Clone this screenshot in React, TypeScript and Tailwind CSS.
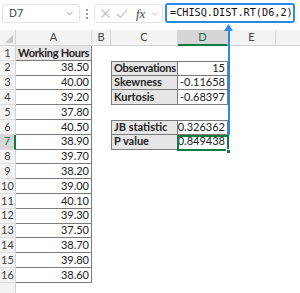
import { ChevronDown } from 'lucide-react';

const hours = ['38.50', '40.00', '39.20', '37.80', '40.50', '38.90', '39.70', '38.20', '39.00', '40.10', '39.30', '37.50', '38.70', '39.80', '38.60'];

// C/D block contents keyed by row number
const stats: Record<number, [string, string]> = {
  2: ['Observations', '15'],
  3: ['Skewness', '-0.11658'],
  4: ['Kurtosis', '-0.68397'],
  6: ['JB statistic', '0.326362'],
  7: ['P value', '0.849438'],
};

const cellFont = { fontFamily: 'Lato, "Open Sans", sans-serif' };

function ColHeader({ label, w, active }: { label: string; w: string; active?: boolean }) {
  return (
    <div
      className={`${w} h-full shrink-0 flex items-center justify-center text-[11px] border-r border-[#d4d4d4] ${
        active ? 'bg-[#d6d6d6] text-[#0e6b3b] border-b-2 border-b-[#107c41]' : 'text-[#444] border-b border-b-[#d4d4d4]'
      }`}
    >
      {label}
    </div>
  );
}

function Row({ n }: { n: number }) {
  const isTop = n === 1;
  const stat = stats[n];
  const active = n === 7;
  return (
    <div className="flex h-[14.8px] whitespace-nowrap" style={cellFont}>
      <div
        className={`w-[16px] shrink-0 flex items-center justify-center text-[11px] border-b border-[#dcdcdc] ${
          active ? 'bg-[#d6d6d6] text-[#107c41] border-r-2 border-r-[#107c41]' : 'bg-[#f3f3f3] text-[#444] border-r border-r-[#d4d4d4]'
        }`}
      >
        {n <= 16 ? n : ''}
      </div>
      {n <= 16 ? (
        <div
          className={`w-[76px] shrink-0 flex items-center px-[2px] text-[#222] border-r border-b border-[#7a7a7a] ${
            isTop ? 'bg-[#e7e6e6] font-bold justify-start text-[11px] tracking-[-0.25px]' : 'bg-white justify-end text-[11px]'
          }`}
        >
          {isTop ? 'Working Hours' : hours[n - 2]}
        </div>
      ) : (
        <div className="w-[76px] shrink-0" />
      )}
      <div className="w-[19px] shrink-0" />
      {stat ? (
        <>
          <div
            className={`w-[67px] shrink-0 flex items-center px-[2px] text-[11px] font-bold text-[#222] bg-[#e7e6e6] border-l border-r border-b border-[#7a7a7a] ${
              n === 2 || n === 6 ? 'border-t' : ''
            } ${n === 2 ? 'tracking-[-0.3px]' : ''}`}
          >
            {stat[0]}
          </div>
          <div
            className={`w-[50px] shrink-0 flex items-center justify-end px-[2px] text-[11px] text-[#222] bg-white border-r border-b border-[#7a7a7a] ${
              n === 2 || n === 6 ? 'border-t' : ''
            }`}
          >
            {stat[1]}
          </div>
        </>
      ) : (
        <div className="w-[117px] shrink-0" />
      )}
    </div>
  );
}

export default function App() {
  const rows = Array.from({ length: 17 }, (_, i) => i + 1);
  return (
    <div className="relative w-[300px] h-[293px] overflow-hidden bg-white">
      {/* formula bar */}
      <div className="h-[30px] flex items-start pt-[4px] pl-[2px]" style={{ fontFamily: '"Open Sans", Roboto, sans-serif' }}>
        <div className="w-[78px] h-[19px] rounded-[3px] border border-[#e3e3e3] bg-white flex items-center justify-between pl-[6px] pr-[4px] text-[11px] text-[#333]">
          <span>D7</span>
          <ChevronDown size={11} strokeWidth={1.6} className="text-[#777]" />
        </div>
        <div className="w-[14px] h-[19px] flex flex-col items-center justify-center gap-[2px]">
          <span className="w-[2px] h-[2px] bg-[#777] rounded-full" />
          <span className="w-[2px] h-[2px] bg-[#777] rounded-full" />
          <span className="w-[2px] h-[2px] bg-[#777] rounded-full" />
        </div>
        <div className="w-[69px] h-[19px] rounded-[3px] border border-[#e3e3e3] bg-white flex items-center pl-[5px] gap-[5px] text-[#bdbdbd]">
          <svg width="11" height="11" viewBox="0 0 11 11" fill="none" stroke="currentColor" strokeWidth="1.1">
            <path d="M1.5 1.5l8 8M9.5 1.5l-8 8" />
          </svg>
          <svg width="12" height="11" viewBox="0 0 12 11" fill="none" stroke="currentColor" strokeWidth="1.1">
            <path d="M1 6l3.5 3.5L11 1.5" />
          </svg>
          <span className="italic text-[13px] text-[#444] leading-none ml-[3px]" style={{ fontFamily: '"Liberation Serif", serif' }}>
            fx
          </span>
          <ChevronDown size={10} strokeWidth={1.4} className="text-[#999]" />
        </div>
        <div className="ml-[2px] w-[130px] h-[20px] -mt-[1px] rounded-[3px] border-2 border-[#2b8ae6] bg-white flex items-center pl-[3px] text-[10.2px] text-[#111] whitespace-nowrap overflow-hidden" style={{ fontFamily: '"DejaVu Sans Mono", monospace' }}>
          =CHISQ.DIST.RT(D6,2)
        </div>
      </div>

      {/* column headers */}
      <div className="flex h-[16px] bg-[#f3f3f3]" style={cellFont}>
        <div className="w-[16px] h-full shrink-0 relative border-r border-b border-[#d4d4d4]">
          <svg className="absolute right-[2px] bottom-[2px]" width="8" height="8" viewBox="0 0 8 8">
            <path d="M8 0L8 8L0 8Z" fill="#c8c8c8" />
          </svg>
        </div>
        <ColHeader label="A" w="w-[76px]" />
        <ColHeader label="B" w="w-[19px]" />
        <ColHeader label="C" w="w-[67px]" />
        <ColHeader label="D" w="w-[50px]" active />
        <ColHeader label="E" w="w-[48px]" />
        <div className="flex-1 h-full border-b border-[#d4d4d4]" />
      </div>

      {rows.map((n) => (
        <Row key={n} n={n} />
      ))}

      {/* active cell D7 */}
      <div className="absolute left-[177px] top-[134.6px] w-[52px] h-[16.2px] border-2 border-[#107c41]" />
      <div className="absolute left-[226px] top-[148.5px] w-[5px] h-[5px] bg-[#107c41] border border-white" />

      {/* arrow from formula to cell */}
      <div className="absolute left-[227.5px] top-[27px] w-[2px] h-[108px] bg-[#2b8ae6]" />
      <svg className="absolute left-[224px] top-[24px]" width="9" height="8" viewBox="0 0 9 8">
        <path d="M4.5 0L9 7H0Z" fill="#2b8ae6" />
      </svg>
    </div>
  );
}
